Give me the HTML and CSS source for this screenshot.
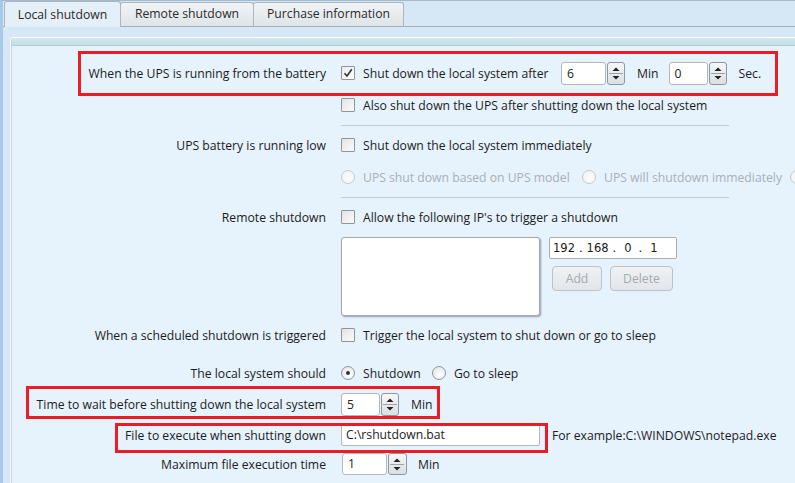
FILE: index.html
```html
<!DOCTYPE html>
<html>
<head>
<meta charset="utf-8">
<link rel="stylesheet" href="styles.css">
</head>
<body>
<div class="window">
  <div class="tabs">
    <div class="tab active">Local shutdown</div>
    <div class="tab">Remote shutdown</div>
    <div class="tab">Purchase information</div>
  </div>
  <div class="panel">
    <div class="panel-head"></div>
    <div class="content">
      <div class="row r1">
        <div class="lbl">When the UPS is running from the battery</div>
        <div class="ctl">
          <span class="cb checked"><svg width="12" height="12" viewBox="0 0 12 12"><path d="M2.5 6.2 L5 9 L9.8 2.2" fill="none" stroke="#333" stroke-width="1.6"/></svg></span>
          <span class="txt t-after">Shut down the local system after</span>
          <span class="spin"><span class="spin-in w45">6</span><span class="spin-btn"><svg width="16" height="21" viewBox="0 0 16 21"><path d="M4.5 8 L8 4.5 L11.5 8 Z" fill="#222"/><line x1="1" y1="10.5" x2="15" y2="10.5" stroke="#9aa3ab"/><path d="M4.5 13 L8 16.5 L11.5 13 Z" fill="#222"/></svg></span></span>
          <span class="txt unit">Min</span>
          <span class="spin sp2"><span class="spin-in w39">0</span><span class="spin-btn"><svg width="16" height="21" viewBox="0 0 16 21"><path d="M4.5 8 L8 4.5 L11.5 8 Z" fill="#222"/><line x1="1" y1="10.5" x2="15" y2="10.5" stroke="#9aa3ab"/><path d="M4.5 13 L8 16.5 L11.5 13 Z" fill="#222"/></svg></span></span>
          <span class="txt unit">Sec.</span>
        </div>
      </div>
      <div class="row r2">
        <div class="lbl"></div>
        <div class="ctl"><span class="cb"></span><span class="txt">Also shut down the UPS after shutting down the local system</span></div>
      </div>
      <div class="sep s1"></div>
      <div class="row r3">
        <div class="lbl">UPS battery is running low</div>
        <div class="ctl"><span class="cb"></span><span class="txt">Shut down the local system immediately</span></div>
      </div>
      <div class="row r4">
        <div class="lbl"></div>
        <div class="ctl disabled">
          <span class="rb"></span><span class="txt rt1">UPS shut down based on UPS model</span>
          <span class="rb"></span><span class="txt rt2">UPS will shutdown immediately</span>
          <span class="rb"></span>
        </div>
      </div>
      <div class="sep s2"></div>
      <div class="row r5">
        <div class="lbl">Remote shutdown</div>
        <div class="ctl"><span class="cb"></span><span class="txt">Allow the following IP's to trigger a shutdown</span></div>
      </div>
      <div class="row rlist">
        <div class="lbl"></div>
        <div class="ctl top">
          <div class="listbox"></div>
          <div class="ipcol">
            <div class="ip"><span>192</span><span>.</span><span>168</span><span>.</span><span class="n1">0</span><span>.</span><span class="n1">1</span></div>
            <div class="btns"><span class="btn b-add">Add</span><span class="btn b-del">Delete</span></div>
          </div>
        </div>
      </div>
      <div class="row r6">
        <div class="lbl">When a scheduled shutdown is triggered</div>
        <div class="ctl"><span class="cb"></span><span class="txt">Trigger the local system to shut down or go to sleep</span></div>
      </div>
      <div class="row r7">
        <div class="lbl">The local system should</div>
        <div class="ctl">
          <span class="rb on"></span><span class="txt rt3">Shutdown</span>
          <span class="rb"></span><span class="txt">Go to sleep</span>
        </div>
      </div>
      <div class="row r8">
        <div class="lbl">Time to wait before shutting down the local system</div>
        <div class="ctl">
          <span class="spin"><span class="spin-in w39">5</span><span class="spin-btn"><svg width="16" height="21" viewBox="0 0 16 21"><path d="M4.5 8 L8 4.5 L11.5 8 Z" fill="#222"/><line x1="1" y1="10.5" x2="15" y2="10.5" stroke="#9aa3ab"/><path d="M4.5 13 L8 16.5 L11.5 13 Z" fill="#222"/></svg></span></span>
          <span class="txt unit">Min</span>
        </div>
      </div>
      <div class="row r9">
        <div class="lbl">File to execute when shutting down</div>
        <div class="ctl">
          <span class="textin">C:\rshutdown.bat</span>
          <span class="txt example">For example:C:\WINDOWS\notepad.exe</span>
        </div>
      </div>
      <div class="row r10">
        <div class="lbl">Maximum file execution time</div>
        <div class="ctl">
          <span class="spin sp3"><span class="spin-in w45">1</span><span class="spin-btn"><svg width="16" height="21" viewBox="0 0 16 21"><path d="M4.5 8 L8 4.5 L11.5 8 Z" fill="#222"/><line x1="1" y1="10.5" x2="15" y2="10.5" stroke="#9aa3ab"/><path d="M4.5 13 L8 16.5 L11.5 13 Z" fill="#222"/></svg></span></span>
          <span class="txt unit">Min</span>
        </div>
      </div>
    </div>
  </div>
  <div class="mark m1"></div>
  <div class="mark m2"></div>
  <div class="mark m3"></div>
</div>
</body>
</html>
```
FILE: styles.css
```css
* { box-sizing: border-box; }
html, body { margin: 0; padding: 0; }
body {
  width: 795px;
  height: 483px;
  overflow: hidden;
  font-family: "Open Sans", "Noto Sans", sans-serif;
  font-size: 12.2px;
  color: #1c1c1c;
  background: #d6e8f5;
}
.window {
  position: relative;
  width: 795px;
  height: 483px;
  border-left: 3px solid #a8cae8;
  border-top: 1px solid #a7b9c8;
  background: #d6e8f5;
  overflow: hidden;
}
.tabs {
  display: flex;
  align-items: flex-end;
  height: 26px;
  padding-left: 1px;
  border-bottom: 1px solid #a4b1bb;
}
.tab {
  height: 24px;
  padding: 0;
  text-align: center;
  white-space: nowrap;
  line-height: 22px;
  border: 1px solid #aab6c0;
  border-bottom: none;
  border-radius: 3px 3px 0 0;
  background: linear-gradient(#f1f4f6, #dfe4e8);
  color: #2a2a2a;
  flex: none;
}
.tab + .tab { margin-left: -1px; }
.tab:nth-child(2) { width: 134px; }
.tab:nth-child(3) { width: 151px; }
.tab.active {
  width: 117px;
  height: 26px;
  line-height: 26px;
  margin-bottom: -1px;
  background: #e4eff8;
  position: relative;
  z-index: 1;
}
.panel {
  margin: 10px 0 0 7px;
  border-left: 1px solid #f4f9fd;
  border-top: 1px solid #ffffff;
  border-radius: 4px 0 0 0;
  height: 450px;
  background: #e6f2fc;
}
.panel-head {
  height: 8px;
  background: linear-gradient(#d3e8ef, #c4dfe8);
  border-bottom: 1px solid #b4cfd8;
  border-left: 1px solid #c6d6df;
  border-radius: 3px 0 0 0;
}
.content {
  border-left: 1px solid #c8d6df;
  height: 441px;
  display: flex;
  flex-direction: column;
}
.row {
  display: flex;
  align-items: center;
  flex: none;
}
.lbl {
  width: 314px;
  text-align: right;
  white-space: nowrap;
  flex: none;
}
.ctl {
  margin-left: 15px;
  display: flex;
  align-items: center;
  white-space: nowrap;
}
.ctl.top { align-items: flex-start; }
.txt { display: inline-block; flex: none; }
.cb {
  width: 14px;
  height: 14px;
  border: 1px solid #8f959b;
  border-radius: 1px;
  background: linear-gradient(135deg, #e0e3e6, #fbfbfb);
  margin-right: 8px;
  display: inline-flex;
  align-items: center;
  justify-content: center;
  flex: none;
}
.cb.checked { background: linear-gradient(135deg, #e8eaec, #ffffff); }
.rb {
  width: 14px;
  height: 14px;
  border-radius: 50%;
  border: 1px solid #8f959b;
  background: radial-gradient(circle at 60% 65%, #ffffff, #dde1e5);
  margin-right: 8px;
  flex: none;
  position: relative;
}
.rb.on::after {
  content: "";
  position: absolute;
  left: 4px; top: 4px;
  width: 4px; height: 4px;
  border-radius: 50%;
  background: #333;
}
.disabled { color: #a9b0b7; }
.disabled .rb { border-color: #c5cbd0; background: radial-gradient(circle at 60% 65%, #fbfcfd, #eef1f3); }
.rt1 { width: 219px; }
.rt2 { width: 186px; }
.rt3 { width: 69px; }

.r1 { margin-top: 15px; height: 24px; }
.r2 { margin-top: 10px; height: 20px; }
.sep { height: 1px; background: #c4ccd3; margin-left: 329px; width: 388px; flex: none; }
.s1 { margin-top: 10px; }
.r3 { margin-top: 9px; height: 20px; }
.r4 { margin-top: 12px; height: 20px; }
.s2 { margin-top: 10px; }
.r5 { margin-top: 9px; height: 20px; }
.rlist { margin-top: 10px; height: 79px; align-items: flex-start; }
.r6 { margin-top: 9px; height: 20px; }
.r7 { margin-top: 18px; height: 20px; }
.r8 { margin-top: 10px; height: 23px; }
.r9 { margin-top: 8px; height: 22px; }
.r10 { margin-top: 7px; height: 22px; }

.t-after { width: 198px; }
.spin { display: inline-flex; flex: none; height: 23px; }
.spin-in {
  height: 23px;
  background: #fff;
  border: 1px solid #b3b8bd;
  border-radius: 3px;
  padding-left: 5px;
  line-height: 21px;
  color: #222;
}
.w45 { width: 45px; }
.w39 { width: 39px; }
.spin-btn {
  width: 18px;
  height: 23px;
  margin-left: 1px;
  border: 1px solid #8d979f;
  border-radius: 3px;
  background: linear-gradient(#f6f7f8, #dadfe3);
  display: flex;
  overflow: hidden;
}
.spin-btn svg { display: block; }
.unit { margin-left: 12px; }
.sp2 { margin-left: 10px; }
.r10 .spin { height: 22px; margin-left: 1px; }
.r10 .spin-in { height: 22px; line-height: 20px; }
.r10 .spin-btn { width: 19px; height: 22px; }
.r10 .unit { margin-left: 11px; }

.listbox {
  width: 199px;
  height: 79px;
  background: #fff;
  border: 1px solid #a4a9ae;
  border-radius: 3px;
  box-shadow: 1px 1px 2px rgba(0,0,0,0.35);
}
.ipcol { margin-left: 9px; }
.ip {
  width: 128px;
  height: 22px;
  background: #fff;
  border: 1px solid #a9aeb3;
  border-radius: 2px;
  font-family: "DejaVu Sans", sans-serif;
  font-size: 11.5px;
  line-height: 20px;
  padding-left: 3px;
  color: #1a1a1a;
  display: flex;
  gap: 4px;
}
.ip .n1 { margin-left: 4px; margin-right: 3px; }
.btns { display: flex; margin-top: 7px; margin-left: 3px; }
.btn {
  height: 25px;
  border: 1px solid #bcc2c7;
  border-radius: 4px;
  background: linear-gradient(#eff2f4, #e2e6ea);
  color: #a3aab0;
  text-align: center;
  line-height: 23px;
}
.b-add { width: 50px; }
.b-del { width: 63px; margin-left: 8px; }

.textin {
  width: 199px;
  height: 22px;
  background: #fff;
  border: 1px solid #b3b8bd;
  border-radius: 2px;
  padding-left: 4px;
  line-height: 20px;
  color: #222;
}
.example { margin-left: 12px; }

.mark {
  position: absolute;
  border: 3px solid #ec1c24;
  pointer-events: none;
}
.m1 { left: 75px; top: 50px; width: 700px; height: 45px; }
.m2 { left: 23px; top: 385px; width: 414px; height: 33px; }
.m3 { left: 112px; top: 422px; width: 433px; height: 30px; }
```
